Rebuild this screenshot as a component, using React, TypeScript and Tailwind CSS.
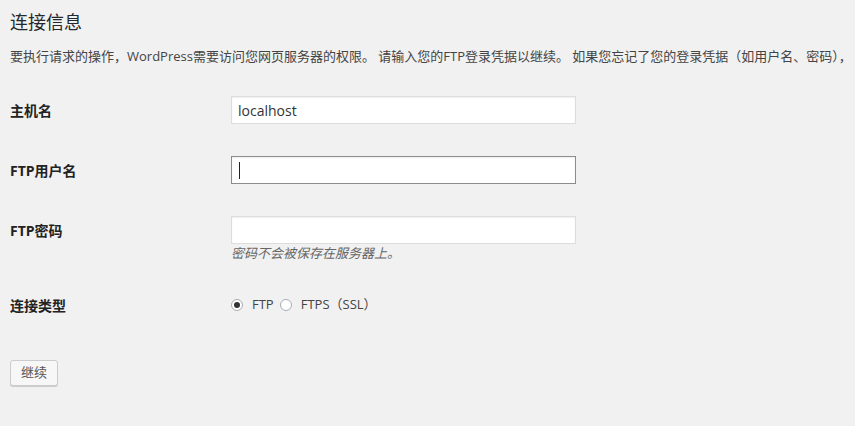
const font = "font-['Open_Sans','Noto_Sans_CJK_SC',sans-serif]";

function Field({ value, focused }: { value?: string; focused?: boolean }) {
  return (
    <div
      className={
        "flex h-[28px] w-[345px] items-center bg-white px-[6px] text-[14px] text-[#333] shadow-[inset_0_1px_2px_rgba(0,0,0,0.07)] border " +
        (focused ? "border-[#8c8c8c] shadow-[0_0_2px_rgba(0,0,0,0.2)]" : "border-[#dddddd]")
      }
    >
      {value}
      {focused && <span className="ml-[1px] h-[17px] w-[1px] bg-[#222]" />}
    </div>
  );
}

function Radio({ checked }: { checked?: boolean }) {
  return (
    <span className="flex h-[12px] w-[12px] items-center justify-center rounded-full border border-[#a8adb2] bg-white">
      {checked && <span className="h-[6px] w-[6px] rounded-full bg-[#333]" />}
    </span>
  );
}

function Row({ label, children, className }: { label: string; children: React.ReactNode; className?: string }) {
  return (
    <div className={"flex items-start " + (className ?? "")}>
      <div className="flex h-[28px] w-[221px] shrink-0 items-center text-[14px] font-bold text-[#222]">{label}</div>
      <div>{children}</div>
    </div>
  );
}

export default function App() {
  return (
    <div className={"min-h-[426px] w-full overflow-hidden bg-[#f1f1f1] pl-[10px] " + font}>
      <h3 className="pt-[10px] text-[18px] leading-[24px] text-[#23282d]">连接信息</h3>
      <p className="mt-[12px] whitespace-nowrap text-[13px] leading-[20px] text-[#444]">
        要执行请求的操作，WordPress需要访问您网页服务器的权限。 请输入您的FTP登录凭据以继续。 如果您忘记了您的登录凭据（如用户名、密码），
      </p>

      <Row label="主机名" className="mt-[30px]">
        <Field value="localhost" />
      </Row>
      <Row label="FTP用户名" className="mt-[32px]">
        <Field focused />
      </Row>
      <Row label="FTP密码" className="mt-[32px]">
        <Field />
        <p className="text-[13px] italic leading-[18px] text-[#666]">密码不会被保存在服务器上。</p>
      </Row>

      <div className="mt-[28px] flex h-[30px] items-center">
        <div className="w-[221px] shrink-0 text-[14px] font-bold text-[#222]">连接类型</div>
        <div className="flex items-center text-[13px] text-[#444]">
          <Radio checked />
          <span className="ml-[9px]">FTP</span>
          <span className="ml-[6px]"><Radio /></span>
          <span className="ml-[9px]">FTPS（SSL）</span>
        </div>
      </div>

      <button className="mt-[40px] h-[26px] w-[48px] rounded-[3px] border border-[#cccccc] bg-[#f7f7f7] text-[13px] text-[#555] shadow-[0_1px_0_#cccccc]">
        继续
      </button>
    </div>
  );
}
